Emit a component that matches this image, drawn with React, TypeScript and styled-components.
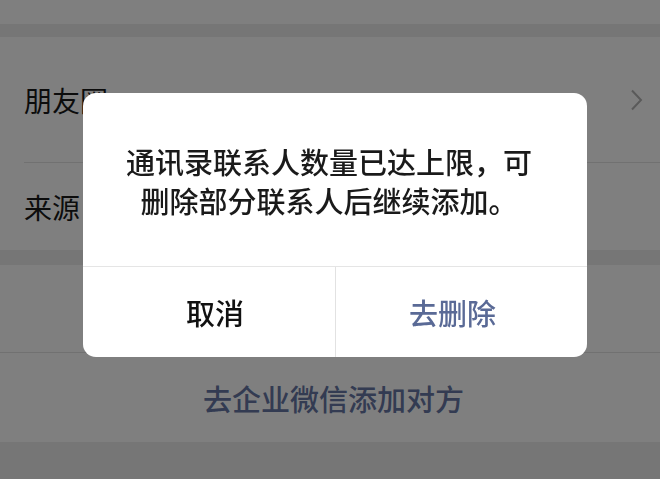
import React from "react";
import styled, { createGlobalStyle } from "styled-components";

const Global = createGlobalStyle`
  html, body { margin: 0; padding: 0; }
  body {
    width: 660px;
    height: 479px;
    overflow: hidden;
    background: #ededed;
    font-family: "Noto Sans CJK SC", "Noto Sans", sans-serif;
  }
`;

const Page = styled.div`
  width: 660px;
  height: 479px;
  display: flex;
  flex-direction: column;
  background: #ededed;
`;

const Band = styled.div<{ $h: number }>`
  height: ${(p) => p.$h}px;
  flex: none;
  background: #ededed;
`;

const Row = styled.div<{ $h: number; $divider?: "inset" | "full" }>`
  height: ${(p) => p.$h}px;
  flex: none;
  background: #ffffff;
  display: flex;
  align-items: center;
  justify-content: space-between;
  padding: 0 17px 0 24px;
  box-sizing: border-box;
  position: relative;
  &::after {
    content: "";
    display: ${(p) => (p.$divider ? "block" : "none")};
    position: absolute;
    left: ${(p) => (p.$divider === "inset" ? "24px" : "0")};
    right: 0;
    bottom: 0;
    height: 1px;
    background: #e2e2e2;
  }
`;

const Label = styled.span`
  font-size: 28px;
  color: #191919;
  line-height: 1;
`;

const LinkRow = styled.div`
  height: 89px;
  flex: none;
  background: #ffffff;
  display: flex;
  align-items: center;
  justify-content: center;
  padding-left: 7px;
  font-size: 29px;
  font-weight: 500;
  color: #6676a4;
`;

const Chevron = () => (
  <svg width="13" height="22" viewBox="0 0 13 22" fill="none">
    <polyline points="2,1.5 11,11 2,20.5" stroke="#b4b4b4" strokeWidth="2" />
  </svg>
);

const Mask = styled.div`
  position: fixed;
  inset: 0;
  background: rgba(0, 0, 0, 0.5);
  display: flex;
  align-items: flex-start;
  justify-content: flex-start;
  padding: 93px 0 0 83px;
`;

const Dialog = styled.div`
  width: 504px;
  height: 264px;
  background: #ffffff;
  border-radius: 13px;
  display: flex;
  flex-direction: column;
  overflow: hidden;
`;

const Message = styled.div`
  height: 174px;
  flex: none;
  display: flex;
  align-items: center;
  justify-content: center;
  padding: 2px 40px 0 28px;
  box-sizing: border-box;
  text-align: center;
  font-size: 29px;
  font-weight: 500;
  line-height: 39px;
  color: #1a1a1a;
  border-bottom: 1px solid #e5e5e5;
`;

const Actions = styled.div`
  flex: 1;
  display: grid;
  grid-template-columns: 252px 1fr;
`;

const Action = styled.div<{ $primary?: boolean }>`
  display: flex;
  align-items: center;
  justify-content: center;
  font-size: 29px;
  font-weight: 500;
  color: ${(p) => (p.$primary ? "#5a6a96" : "#111111")};
  padding: ${(p) => (p.$primary ? "0 18px 0 0" : "0 0 0 12px")};
  border-left: ${(p) => (p.$primary ? "1px solid #e2e2e2" : "none")};
`;

export default function App() {
  return (
    <>
      <Global />
      <Page>
        <Row $h={24} />
        <Band $h={13} />
        <Row $h={126} $divider="inset">
          <Label>朋友圈</Label>
          <Chevron />
        </Row>
        <Row $h={87}>
          <Label>来源</Label>
        </Row>
        <Band $h={15} />
        <Row $h={88} $divider="full" />
        <LinkRow>去企业微信添加对方</LinkRow>
        <Band $h={37} />
      </Page>
      <Mask>
        <Dialog>
          <Message>
            通讯录联系人数量已达上限，可
            <br />
            删除部分联系人后继续添加。
          </Message>
          <Actions>
            <Action>取消</Action>
            <Action $primary>去删除</Action>
          </Actions>
        </Dialog>
      </Mask>
    </>
  );
}
